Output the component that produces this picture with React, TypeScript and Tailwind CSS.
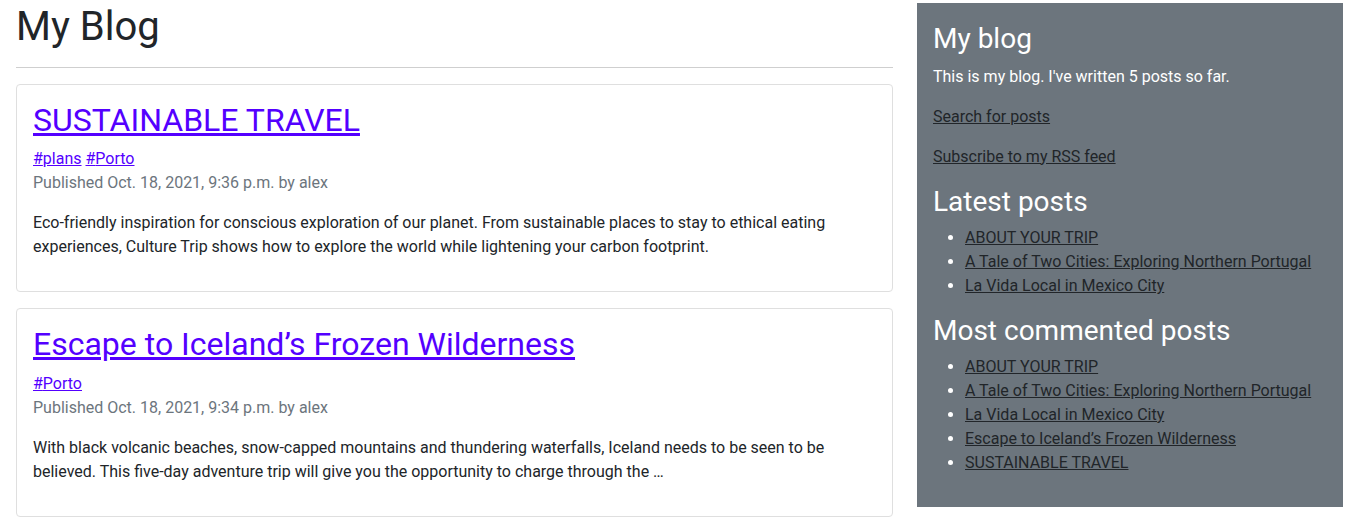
const posts = [
  {
    title: 'SUSTAINABLE TRAVEL',
    tags: ['plans', 'Porto'],
    published: 'Oct. 18, 2021, 9:36 p.m.',
    body: 'Eco-friendly inspiration for conscious exploration of our planet. From sustainable places to stay to ethical eating experiences, Culture Trip shows how to explore the world while lightening your carbon footprint.',
  },
  {
    title: 'Escape to Iceland\u2019s Frozen Wilderness',
    tags: ['Porto'],
    published: 'Oct. 18, 2021, 9:34 p.m.',
    body: 'With black volcanic beaches, snow-capped mountains and thundering waterfalls, Iceland needs to be seen to be believed. This five-day adventure trip will give you the opportunity to charge through the \u2026',
  },
]

const latest = ['ABOUT YOUR TRIP', 'A Tale of Two Cities: Exploring Northern Portugal', 'La Vida Local in Mexico City']

const mostCommented = [
  'ABOUT YOUR TRIP',
  'A Tale of Two Cities: Exploring Northern Portugal',
  'La Vida Local in Mexico City',
  'Escape to Iceland\u2019s Frozen Wilderness',
  'SUSTAINABLE TRAVEL',
]

function PostCard({ post }: { post: (typeof posts)[number] }) {
  return (
    <div className="mb-4 rounded border border-[#dfdfdf] p-4">
      <h2 className="mb-2 text-[32px] leading-[1.2]">
        <a href="#" className="text-[#5400ff] underline">
          {post.title}
        </a>
      </h2>
      <p className="leading-6">
        {post.tags.map((t, i) => (
          <span key={t}>
            {i > 0 && ' '}
            <a href="#" className="text-[#5400ff] underline">
              #{t}
            </a>
          </span>
        ))}
      </p>
      <p className="leading-6 text-[#6c757d]">Published {post.published} by alex</p>
      <p className="mt-4 mb-4 leading-6">{post.body}</p>
    </div>
  )
}

function SideList({ items }: { items: string[] }) {
  return (
    <ul className="mb-4 list-disc pl-8 leading-6">
      {items.map((item, i) => (
        <li key={i}>
          <a href="#" className="text-[#212529] underline">
            {item}
          </a>
        </li>
      ))}
    </ul>
  )
}

export default function App() {
  return (
    <div
      className="flex gap-6 pt-[3px] pl-4 pr-1 text-base text-[#212529]"
      style={{ fontFamily: 'Roboto, "Liberation Sans", sans-serif' }}
    >
      <div className="flex-1">
        <h1 className="mb-2 text-[40px] leading-[1.2]">My Blog</h1>
        <hr className="my-4 border-t border-[#cfcfcf]" />
        {posts.map((p) => (
          <PostCard key={p.title} post={p} />
        ))}
      </div>
      <div className="w-[426px] self-start bg-[#6c757d] px-4 pt-[19px] pb-4 text-white">
        <h3 className="mb-[9px] text-[28px] leading-[1.2]">My blog</h3>
        <p className="mb-4 leading-6">This is my blog. I've written 5 posts so far.</p>
        <p className="mb-4 leading-6">
          <a href="#" className="text-[#212529] underline">
            Search for posts
          </a>
        </p>
        <p className="mb-4 leading-6">
          <a href="#" className="text-[#212529] underline">
            Subscribe to my RSS feed
          </a>
        </p>
        <h3 className="mb-2 text-[28px] leading-[1.2]">Latest posts</h3>
        <SideList items={latest} />
        <h3 className="mb-[7px] text-[28px] leading-[1.2]">Most commented posts</h3>
        <SideList items={mostCommented} />
      </div>
    </div>
  )
}
